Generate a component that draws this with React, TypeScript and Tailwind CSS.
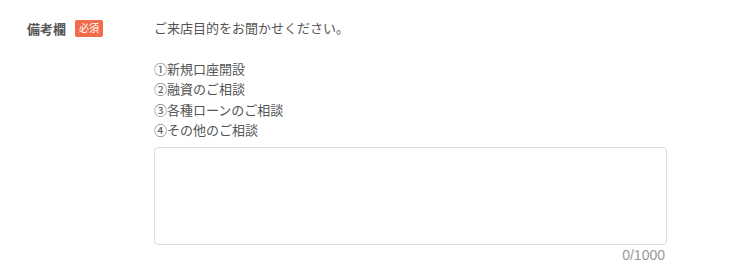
export default function App() {
  const lines = ['ご来店目的をお聞かせください。', '', '①新規口座開設', '②融資のご相談', '③各種ローンのご相談', '④その他のご相談'];

  return (
    <div className="w-[736px] h-[276px] bg-white font-['Noto_Sans_CJK_JP','Noto_Sans',sans-serif] text-[#555]">
      <div className="flex pl-[27px] pt-[18px]">
        <div className="w-[127px] shrink-0">
          <div className="flex items-center gap-[9px] h-[20.4px]">
            <span className="text-[13px] font-bold text-[#555] leading-none">備考欄</span>
            <span className="inline-flex items-center justify-center w-[28px] h-[17px] rounded-[2px] bg-[#f26b4b] text-white text-[10px] leading-none">
              必須
            </span>
          </div>
        </div>
        <div className="w-[513px]">
          <div className="text-[13px] leading-[20.4px]">
            {lines.map((l, i) => (
              <p key={i} className="h-[20.4px]">{l}</p>
            ))}
          </div>
          <textarea className="mt-[7px] block w-[513px] h-[98px] border border-[#ddd] rounded-[4px] resize-none outline-none p-2 text-[13px]" />
          <div className="text-right font-['Liberation_Sans',Arial,sans-serif] text-[14px] leading-[20px] text-[#999] pr-[2px]">0/1000</div>
        </div>
      </div>
    </div>
  );
}
